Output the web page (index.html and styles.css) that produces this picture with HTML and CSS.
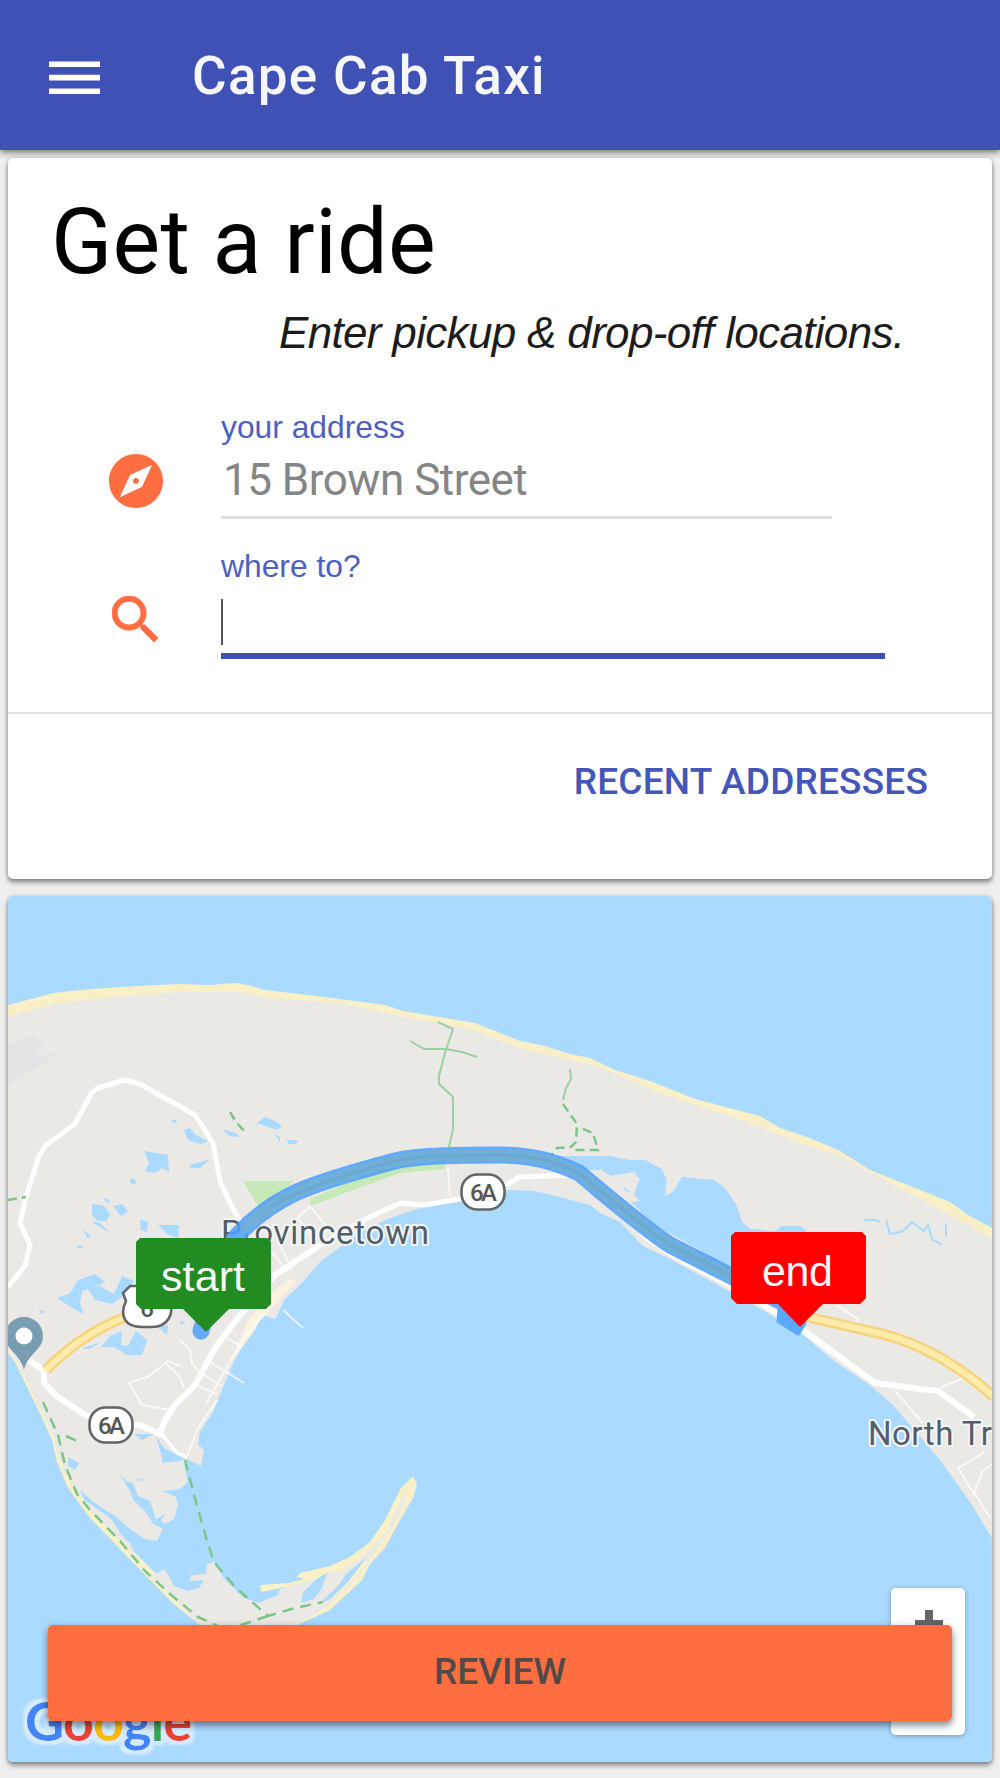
FILE: index.html
```html
<!DOCTYPE html>
<html lang="en">
<head>
<meta charset="utf-8">
<title>Cape Cab Taxi</title>
<link rel="stylesheet" href="styles.css">
</head>
<body>
<header class="appbar">
  <svg class="menu-icon" viewBox="0 0 52 34" aria-hidden="true"><path d="M0 3h52M0 16.700h52M0 30.500h52" stroke="#fff" stroke-width="5.800"/></svg>
  <h1 class="appbar-title">Cape Cab Taxi</h1>
</header>
<main class="content">
  <section class="card ride-card">
    <h2 class="ride-title">Get a ride</h2>
    <p class="tagline">Enter pickup &amp; drop-off locations.</p>
    <div class="field">
      <svg class="field-icon" viewBox="2 2 20 20" aria-hidden="true"><path fill="#ff6e40" d="M12 10.900c-.61 0-1.100.49-1.100 1.100s.49 1.100 1.100 1.100c.61 0 1.100-.49 1.100-1.100s-.49-1.100-1.100-1.100zM12 2C6.480 2 2 6.480 2 12s4.480 10 10 10 10-4.480 10-10S17.520 2 12 2zm2.190 12.190L6 18l3.810-8.190L18 6l-3.810 8.190z"/></svg>
      <label class="field-body">
        <span class="field-label">your address</span>
        <span class="field-value">15 Brown Street</span>
      </label>
    </div>
    <div class="field field-focused">
      <svg class="field-icon search-icon" viewBox="3 3 17.500 17.500" aria-hidden="true"><path fill="#ff6e40" stroke="#ff6e40" stroke-width=".3" d="M15.500 14h-.79l-.28-.27C15.410 12.590 16 11.110 16 9.500 16 5.910 13.090 3 9.500 3S3 5.910 3 9.500 5.910 16 9.500 16c1.610 0 3.090-.59 4.230-1.570l.27.28v.79l5 4.990L20.490 19l-4.990-5zm-6 0C7.010 14 5 11.990 5 9.500S7.010 5 9.500 5 14 7.010 14 9.500 11.990 14 9.500 14z"/></svg>
      <label class="field-body">
        <span class="field-label">where to?</span>
        <span class="field-value"><span class="caret"></span></span>
      </label>
    </div>
    <div class="card-actions"><span class="link">Recent addresses</span></div>
  </section>

  <section class="card map-card">
    <svg class="map" viewBox="8 896 984 866">
      <defs><filter id="halo" x="-10%" y="-30%" width="120%" height="160%"><feMorphology in="SourceAlpha" operator="dilate" radius="3.500"/><feGaussianBlur stdDeviation="1" result="o"/><feFlood flood-color="#d6ebfd"/><feComposite in2="o" operator="in" result="h"/><feMerge><feMergeNode in="h"/><feMergeNode in="SourceGraphic"/></feMerge></filter></defs>
      <rect x="8" y="896" width="984" height="866" fill="#aadaff"/>
      <!-- beaches -->
      <path fill="#f9f0c8" d="M8 1005 35 998 53 993 80 990 120 987 178 984 210 985 235 983 248 985 265 990 300 994 340 999 385 1005 403 1011 475 1023 520 1041 545 1046 570 1054 590 1058 615 1070 650 1081 695 1099 760 1116 780 1128 810 1138 840 1151 870 1170 920 1190 950 1202 970 1216 992 1228V1270H860L670 1180 500 1130H250L120 1350 60 1440 64 1470 82 1497 115 1532 150 1568 185 1600 220 1630 200 1625 175 1605 150 1580 120 1549 90 1518 68 1488 57 1462 52 1440 43 1420 30 1393 15 1362 8 1353z"/>
      <path fill="#f9f0c8" d="M413 1476 401 1488 385 1520 370 1542 350 1557 330 1566 300 1573 297 1577 305 1579 318 1576 288 1583 260 1585 261 1592 285 1587 300 1605 260 1640 295 1626 330 1610 345 1596 362 1580 370 1564 385 1548 400 1520 413 1498 417 1485z"/>
      <!-- land -->
      <path fill="#eae9e5" d="M8 1016 60 1003 100 998 180 992 240 992 270 998 340 1003 400 1016 470 1029 520 1048 600 1067 660 1093 740 1119 800 1143 840 1156 900 1188 992 1238V1538L970 1502 940 1460 910 1425 895 1407 870 1385 830 1358 800 1332 740 1297 670 1259 643 1246 620 1222 600 1213 590 1205 560 1197 535 1191 505 1190 480 1198 455 1200 420 1208 390 1218 365 1230 340 1247 320 1262 300 1285 285 1299 282 1305 275 1319 262 1315 255 1330 240 1350 230 1370 222 1390 213 1412 200 1432 198 1445 204 1450 201 1466 187 1459 184 1465 188 1482 180 1489 163 1491 176 1497 178 1506 174 1519 165 1524 158 1518 150 1522 163 1529 157 1541 145 1539 130 1529 115 1516 100 1507 93 1502 112 1520 122 1536 130 1543 138 1560 150 1575 158 1573 164 1569 170 1578 174 1586 188 1591 199 1588 204 1580 190 1581 191 1575 206 1574 207 1564 214 1562 225 1580 244 1598 259 1603 278 1595 280 1589 300 1583 318 1578 303 1591 301 1603 320 1592 327 1572 347 1571 345 1580 322 1603 338 1594 362 1570 368 1560 345 1574 345 1567 360 1559 385 1534 403 1495 407 1496 394 1525 375 1552 362 1573 345 1590 330 1604 300 1623 280 1640H215L185 1610 155 1580 125 1546 92 1512 73 1488 60 1460 52 1434 35 1398 16 1360 8 1350z"/>
      <!-- inlets between the sand bars of the point -->
      <g fill="#aadaff"><path d="M318 1578 303 1592 301 1603 314 1599 322 1588 327 1573zM366 1558 346 1574 338 1586 320 1603 330 1599 348 1582zM280 1589 264 1597 258 1602 272 1595z"/></g>
      <path fill="#e3e4e5" d="M8 1045 30 1036 44 1042 34 1058 53 1052 57 1054 8 1086z"/>
      <!-- parkland -->
      <path fill="#c5eab7" d="M243 1181h51l-34 28zM310 1199 375 1171 445 1158V1169L400 1173 345 1193 311 1206z"/>
      <!-- ponds and marshes -->
      <g fill="#aadaff">
        <path d="M170 1121l5-2 3 5zM184 1130l6-2 6 7 12 6-7 3-13-4zM222 1129l14 4 4 4-11-1zM257 1123l8-6 10 4 7 5-5 4zM286 1140l12 0-2 4-7 0zM275 1134l5 3 0 6zM144 1151l24 4 1 17-7-4-7 5-10-2 4-8zM190 1165l20-6-10 9-10 0zM131 1178l6 3-3 4-4-3zM92 1204l12 2 6 8-3 7-9 0-6-6zM113 1206l10-2 5 8-7 4zM102 1198l8 2-2 3zM91 1222l8 0 10 10zM83 1229l8 7-4 2zM76 1245l8 1-5 3zM140 1219l8 3-1 10-6-2zM158 1225l21 0-1 13-11-4z"/>
        <path d="M57 1298l13-5 8-13 17-6 10 8-10 5-13 4-2 13 4 10-12-6zM88 1289l12-3 14 8 8-18 12 5-9 14-13 9-17-4zM39 1309l6 3-3 2zM110 1336l12-5-1 14 7 1 8-15 11 9-5 15-15 0-13-8-13 0zM158 1327l10-2-1 10zM82 1348l20-6-13 7zM179 1321l6 1-3 3zM134 1434l20 0-12 6zM156 1436l8 12 16 8 5 4-22 3-3-13zM119 1473l7 8 7 2 5 13 12 5 6 19 9-6-8 13-14-18-9-8-4-10zM68 1457l11 6-4 7-7-4zM136 1478l9 2-7 1zM80 1490l12 11 24 17-10-3-22-15z"/>
        <path d="M559 1156H610L630 1160 645 1160 662 1169 667 1180 665 1195 662 1197 673 1192 682 1177 714 1180 724 1187 736 1204 742 1222 750 1229 776 1231 781 1226 800 1226 810 1234 810 1280 735 1278 700 1250 654 1225 631 1202 640 1201 634 1195 640 1178 612 1176 597 1170 580 1170z"/>
      </g>
      <path fill="#eae9e5" d="M589 1173l12-4 9 7 25-4 3 7-6 15-3 10-12-2z"/><path fill="#aadaff" d="M624 1187l6 5-5-1z"/>
      <g fill="none" stroke="#aadaff" stroke-width="2"><path d="M864 1220h12l4 2M886 1220l4 14 13-3 9-9 12 9 4-6 4 14 10 6M946 1223v14"/></g>
      <path fill="#fbf2df" d="M290 1278 296 1282 260 1321 239 1352 232 1360 248 1320 275 1290z"/>
      <!-- minor roads -->
      <g fill="none" stroke="#fff" stroke-width="2" opacity=".7">
        <path d="M128 1383l20-6 20-16 12 5M129 1383l13 22 28 5M165 1363l14 13 5 12M180 1340l10 10 2 14 10 10M187 1457l10-27 20-30M193 1384l24 10M210 1362l20 12M222 1335l20 12M200 1372l22 14M206 1404l34-60 30-40M270 1250l18 22M280 1245l12 25M448 1168l2 28M283 1310l20 18M228 1373l16 10M310 1206l-12 12 12 18M310 1206l16 20M836 1305l22 14-5 6M895 1391l28 32M940 1388l28-12M985 1452l-27 16 16 26 8-22 10-8M974 1492l16 26"/>
      </g>
      <g fill="none" stroke="#fff" stroke-linejoin="round">
        <path stroke-width="5" d="M8 1287 25 1266 30 1245 20 1223 25 1200 39 1156 46 1145 75 1124 92 1092 98 1088 125 1080 140 1084 195 1115 213 1143 220 1181 230 1203 245 1230"/>
        <path stroke-width="6" d="M25 1358 44 1370V1382L55 1395 85 1415 110 1425 140 1425 160 1434 165 1420 175 1405 195 1385 215 1348 240 1315 275 1275 320 1245"/>
        <path stroke-width="5" d="M320 1245 370 1217 400 1203 425 1205 460 1199 508 1184 520 1177 570 1175 600 1194 650 1241 675 1257 740 1291 800 1327"/>
        <path stroke-width="6" d="M800 1328 875 1383 920 1389 938 1391 974 1417"/>
        <path stroke-width="3" d="M162 1434 177 1453 187 1457"/>
      </g>
      <g fill="none" stroke="#f6d47f" stroke-width="11"><path d="M46 1370Q87 1328 140 1312M808 1317 865 1330Q935 1343 994 1397"/></g>
      <g fill="none" stroke="#ffecaa" stroke-width="6"><path d="M45 1371Q87 1328 140 1312M808 1317 865 1330Q935 1343 994 1397"/></g>
      <!-- trails -->
      <g fill="none" stroke="#9bd0a3" stroke-width="2">
        <path d="M438 1022l15 7-8 24-6 23v8l14 13v32l-4 18M410 1041l14 8h22l16 3 15 5M570 1069l1 10-5 9-3 12"/>
        <g stroke="#7cc687" stroke-width="2.500" stroke-dasharray="9 5"><path d="M563 1104l14 20-1 18-5 5-14 1-6 8M583 1129l10 4 5 17-24 0M230 1112l6 10 10 11M8 1200l18-3"/><path stroke-dasharray="11 7" d="M43 1402 58 1435 65 1465 77 1494 90 1510 120 1541 145 1571 170 1594 198 1617 220 1627M185 1460 194 1495 207 1541 214 1562 235 1587 268 1616 295 1608 323 1602M268 1616 235 1627M66 1436l11 5"/></g>
      </g>
      <!-- place names and route shields -->
      <g class="place">
        <text x="221" y="1244" textLength="208">Provincetown</text>
        <text x="868" y="1445" letter-spacing=".5">North Tr</text>
      </g>
      <!-- driving route -->
      <g fill="none" stroke-linecap="round" stroke-linejoin="round">
        <path stroke="#509fff" stroke-opacity=".88" stroke-width="17" d="M201 1331 222 1260 236 1237C252 1219 272 1204 295 1193 320 1181 365 1169 395 1161 420 1155 465 1155 500 1155 535 1155 558 1163 579 1173 600 1190 640 1225 670 1245L790 1306"/>
        <path stroke="#70afd9" stroke-width="12" d="M246 1227C260 1213 275 1203 295 1193 320 1181 365 1169 395 1161 420 1155 465 1155 500 1155 535 1155 558 1163 579 1173 600 1190 640 1225 670 1245L750 1286"/>
        <path stroke="#6ca9d0" stroke-width="3" d="M270 1208C280 1200 320 1181 395 1161 420 1155 465 1155 500 1155 535 1155 558 1163 579 1173 600 1190 640 1225 670 1245L740 1280"/>
      </g>
      <path d="M780 1309 804 1323 798 1333 779 1321z" fill="#5ba9fb" stroke="#5ba9fb" stroke-width="5" stroke-linejoin="round"/>
      <g class="shield" fill="#fff" stroke="#636567" stroke-width="2.600">
        <rect x="461.500" y="1174.500" width="43" height="35" rx="16"/>
        <rect x="89.500" y="1407.500" width="43" height="35" rx="16"/>
        <path d="M130 1286l-7 7 3 8c-7 15-1 26 16 26h10c16 0 23-14 17-26l2-8-8-7z"/>
      </g>
      <g class="shield-text" text-anchor="middle"><text x="483.500" y="1201" textLength="27">6A</text><text x="111.500" y="1434" textLength="27">6A</text><text x="147" y="1317">6</text></g>
      <path fill="#7a9eb1" d="M24 1370C20 1353 5 1350 5 1336a19 19 0 0 1 38 0C43 1350 28 1353 24 1370z"/>
      <circle cx="24" cy="1336" r="8.500" fill="#fff"/>
      <!-- pickup and drop-off markers -->
      <path fill="#228b22" d="M140 1238H267L271 1242V1304L266 1309H229L206 1332 183 1309H141L136 1304V1242z"/>
      <path fill="#f00" d="M735 1232H862L866 1236V1298L860 1304H823L800 1327 778 1304H737L731 1298V1236z"/>
      <g class="marker"><text x="161" y="1291" textLength="84">start</text><text x="762" y="1286" textLength="71">end</text></g>
      <text class="logo" filter="url(#halo)" x="25" y="1741" textLength="167"><tspan fill="#4285f4">G</tspan><tspan fill="#ea4335">o</tspan><tspan fill="#fbbc04">o</tspan><tspan fill="#4285f4">g</tspan><tspan fill="#34a853">l</tspan><tspan fill="#ea4335">e</tspan></text>
    </svg>
    <div class="zoom"><svg viewBox="0 0 28 28"><path d="M10 0h8v10h10v8H18v10h-8V18H0v-8h10z" fill="#666"/></svg></div>
    <button class="review">Review</button>
  </section>
</main>
</body>
</html>
```
FILE: styles.css
```css
* { box-sizing: border-box; }
body { margin: 0; background: #eee; font-family: Roboto, sans-serif; height: 1778px; overflow: hidden; }
h1, h2, p { margin: 0; font-weight: 400; white-space: nowrap; }

.appbar { position: relative; z-index: 1; height: 150px; padding: 2px 49px 0; display: flex; align-items: center; gap: 92px; background: #3f51b5; box-shadow: 0 3px 6px rgba(0,0,0,.45); }
.menu-icon { width: 51px; height: 34px; margin-top: 3px; }
.appbar-title { font-size: 53px; font-weight: 500; letter-spacing: 1.300px; color: #f6f6fd; line-height: 60px; }

.content { padding: 8px 8px 0; display: flex; flex-direction: column; gap: 17px; }
.card { border-radius: 5px; background: #fff; box-shadow: 0 4px 5px rgba(0,0,0,.3), 0 1px 4px rgba(0,0,0,.3); }
.ride-card { height: 721px; display: flex; flex-direction: column; }
.ride-title { font-size: 90px; line-height: 100px; letter-spacing: .2px; padding: 35px 0 0 43px; color: #000; }
.tagline { font: italic 44px/50px "Liberation Sans", sans-serif; letter-spacing: -.67px; padding: 15px 0 0 271px; color: #1c1c1c; }

.field { display: flex; gap: 58px; padding: 50px 0 0 101px; height: 161px; }
.field-icon { width: 54px; height: 54px; margin-top: 46px; }
.field-body { width: 611px; display: flex; flex-direction: column; border-bottom: 3px solid #e0e0e0; font-family: "Liberation Sans", sans-serif; }
.field-label { font-size: 31.800px; line-height: 36px; padding-top: 1px; color: #4e5fbe; white-space: nowrap; }
.field-value { font: 44px/52px Roboto, sans-serif; letter-spacing: -.5px; padding: 9px 0 0 2px; color: #858585; white-space: nowrap; }
.field-focused { padding: 28px 0 0 104px; gap: 63px; height: 140px; }
.field-focused .field-body { width: 664px; border-bottom: 6px solid #3f51b5; }
.search-icon { width: 46px; height: 46px; margin-top: 49px; }
.field-focused .field-value { padding: 15px 0 0; }
.caret { display: block; width: 2px; height: 46px; background: #555; }

.card-actions { flex: 1; margin-top: 53px; padding: 46px 64px 0 0; border-top: 2px solid #e2e2e2; text-align: right; }
.link { font-size: 37px; line-height: 44px; letter-spacing: .2px; font-weight: 500; color: #4456b7; text-transform: uppercase; white-space: nowrap; }

.map-card { position: relative; height: 866px; overflow: visible; }
.map { display: block; width: 984px; height: 866px; border-radius: 5px; }
.place text { font: 33px Roboto, sans-serif; fill: #535e68; stroke: #f3f6f7; stroke-width: 4px; paint-order: stroke; stroke-linejoin: round; }
.shield-text { font: 500 24px Roboto, sans-serif; fill: #555; }
.marker { font: 43px "Liberation Sans", sans-serif; fill: #f7f7f7; }
.logo { font: 700 54px Lato, sans-serif; }
.zoom { position: absolute; right: 27px; bottom: 27px; width: 74px; height: 147px; border-radius: 5px; background: #fff; box-shadow: 0 1px 5px rgba(0,0,0,.3); padding: 22px 22px; }
.zoom svg { display: block; width: 28px; height: 28px; margin-left: 2px; }
.review { position: absolute; left: 40px; right: 40px; bottom: 41px; height: 96px; border: 0; border-radius: 5px; background: #ff6e40; color: #504a48; font: 500 37px Roboto, sans-serif; text-transform: uppercase; padding: 0 0 4px; box-shadow: 0 5px 6px rgba(0,0,0,.3), 0 2px 8px rgba(0,0,0,.25); }
```
